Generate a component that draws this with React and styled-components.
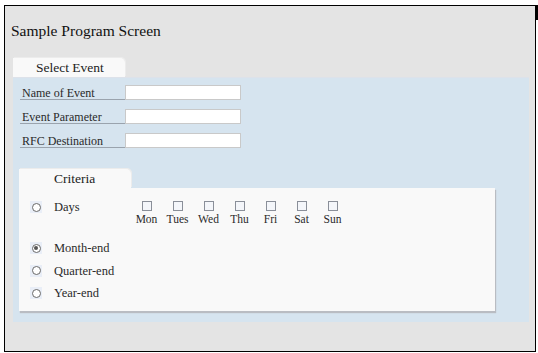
import React from "react";
import styled, { createGlobalStyle } from "styled-components";

const Global = createGlobalStyle`
  html, body { margin: 0; padding: 0; background: #ffffff; }
  body { font-family: "Liberation Serif", "Times New Roman", serif; }
`;

const Frame = styled.div`
  position: relative;
  margin: 5px 0 0 4px;
  width: 530px;
  height: 345px;
  border: 1px solid #000;
  background: #e4e4e4;
  box-sizing: content-box;
  &::after {
    content: "";
    position: absolute;
    right: -3px;
    top: -1px;
    width: 2px;
    height: 15px;
    background: #000;
  }
`;

const Title = styled.div`
  padding: 16px 0 0 6px;
  height: 23px;
  font-size: 15.5px;
  color: #111;
  line-height: 18px;
`;

const Section = styled.div`
  display: flex;
  flex-direction: column;
  align-items: flex-start;
  margin-left: ${(p) => p.$left || 0}px;
  margin-top: ${(p) => p.$top || 0}px;
`;

const Tab = styled.div`
  width: ${(p) => p.$width}px;
  height: 19px;
  box-sizing: border-box;
  padding-left: ${(p) => p.$pad}px;
  background: #f9f9f9;
  border-top-right-radius: 5px;
  box-shadow: 1px -1px 0 #ececec;
  font-size: 13.5px;
  line-height: 19px;
  color: #222;
`;

const BluePanel = styled.div`
  width: 516px;
  height: 245px;
  box-sizing: border-box;
  background: #d6e4ef;
  border-top: 1px solid #dde2ea;
  padding: 7px 0 0 6px;
`;

const FormRow = styled.div`
  display: flex;
  align-items: flex-start;
  height: 24px;
`;

const FieldLabel = styled.div`
  width: 105px;
  height: 14px;
  box-sizing: border-box;
  margin-left: 1px;
  padding-left: 2px;
  border-bottom: 1px solid #9aa3ad;
  font-size: 12px;
  line-height: 14px;
  color: #2a2a2a;
  margin-top: 1px;
`;

const TextBox = styled.div`
  width: 116px;
  height: 15px;
  box-sizing: border-box;
  background: #fff;
  border: 1px solid #c9c9c9;
`;

const CriteriaBlock = styled.div`
  margin-top: 12px;
  display: flex;
  flex-direction: column;
  align-items: flex-start;
`;

const CriteriaPanel = styled.div`
  width: 476px;
  height: 123px;
  box-sizing: border-box;
  background: #f9f9f9;
  box-shadow: 1px 2px 1px #b9bcc2;
  padding: 13px 0 0 11px;
`;

const OptionRow = styled.div`
  display: flex;
  align-items: flex-start;
  height: ${(p) => p.$h}px;
`;

const RadioWrap = styled.span`
  width: 12px;
  height: 12px;
  background: #e9eef7;
  display: flex;
  align-items: center;
  justify-content: center;
  flex-shrink: 0;
`;

const RadioCircle = styled.span`
  width: 9px;
  height: 9px;
  box-sizing: border-box;
  border: 1.3px solid #6a6a6a;
  border-radius: 50%;
  background: #fff;
  display: flex;
  align-items: center;
  justify-content: center;
  &::after {
    content: "";
    display: ${(p) => (p.$checked ? "block" : "none")};
    width: 4px;
    height: 4px;
    border-radius: 50%;
    background: #555;
  }
`;

const OptionLabel = styled.span`
  margin-left: 12px;
  width: ${(p) => p.$w || "auto"};
  font-size: 12.5px;
  line-height: 12px;
  color: #2a2a2a;
  flex-shrink: 0;
`;

const DayGroup = styled.div`
  display: flex;
`;

const DayCol = styled.div`
  width: 31px;
  display: flex;
  flex-direction: column;
  align-items: center;
`;

const CheckBox = styled.span`
  width: 10px;
  height: 10px;
  box-sizing: border-box;
  border: 1px solid #8a8f99;
  background: #f4f6fa;
`;

const DayLabel = styled.span`
  font-size: 11.5px;
  line-height: 12px;
  margin-top: 2px;
  color: #2a2a2a;
`;

const Radio = ({ checked }) => (
  <RadioWrap>
    <RadioCircle $checked={checked} />
  </RadioWrap>
);

const fields = ["Name of Event", "Event Parameter", "RFC Destination"];
const days = ["Mon", "Tues", "Wed", "Thu", "Fri", "Sat", "Sun"];
const periods = [
  { label: "Month-end", checked: true },
  { label: "Quarter-end", checked: false },
  { label: "Year-end", checked: false },
];

export default function App() {
  return (
    <>
      <Global />
      <Frame>
        <Title>Sample Program Screen</Title>
        <Section $left={8} $top={13}>
          <Tab $width={112} $pad={23}>Select Event</Tab>
          <BluePanel>
            {fields.map((f) => (
              <FormRow key={f}>
                <FieldLabel>{f}</FieldLabel>
                <TextBox />
              </FormRow>
            ))}
            <CriteriaBlock>
              <Tab $width={112} $pad={35}>Criteria</Tab>
              <CriteriaPanel>
                <OptionRow $h={41}>
                  <Radio />
                  <OptionLabel $w="77px">Days</OptionLabel>
                  <DayGroup>
                    {days.map((d) => (
                      <DayCol key={d}>
                        <CheckBox />
                        <DayLabel>{d}</DayLabel>
                      </DayCol>
                    ))}
                  </DayGroup>
                </OptionRow>
                {periods.map((p) => (
                  <OptionRow key={p.label} $h={22.5}>
                    <Radio checked={p.checked} />
                    <OptionLabel>{p.label}</OptionLabel>
                  </OptionRow>
                ))}
              </CriteriaPanel>
            </CriteriaBlock>
          </BluePanel>
        </Section>
      </Frame>
    </>
  );
}
